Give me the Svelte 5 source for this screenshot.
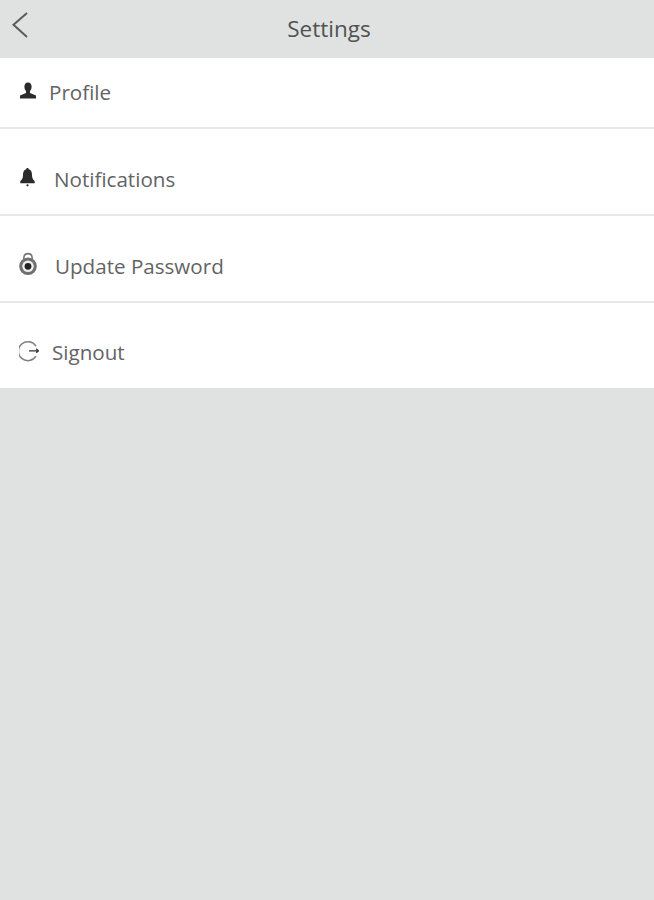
<script lang="ts">
  const rows = [
    { label: 'Profile', icon: 'user', gap: 10 },
    { label: 'Notifications', icon: 'bell', gap: 15 },
    { label: 'Update Password', icon: 'lock', gap: 16 },
    { label: 'Signout', icon: 'out', gap: 13 },
  ];
</script>

<div class="page">
  <header class="bar">
    <svg class="back" width="20" height="30" viewBox="0 0 20 30" aria-label="Back">
      <path d="M18 2 L4.500 13.800 L18 26" fill="none" stroke="#5a5c5c" stroke-width="2" />
    </svg>
    <span class="title">Settings</span>
  </header>

  <ul class="list">
    {#each rows as row}
      <li class="row" style={`gap: ${row.gap}px`}>
        <svg class="icon" width="20" height="28" viewBox="0 0 20 28">
          {#if row.icon === 'user'}
            <path d="M9 4.500c-2.600 0-3.600 2-3.600 4.300 0 2 .7 3.200 1.600 4.200v2L1 17.500v3h16v-3L11 15v-2c.9-1 1.600-2.200 1.600-4.200 0-2.300-1-4.300-3.600-4.300z" fill="#2b2b2b" />
          {:else if row.icon === 'bell'}
            <path d="M8.500 3c-.8 0-1.300.6-1.300 1.300C4.800 5 4 7.200 4 10c0 3-.9 4.600-2.700 6v2.200h14.400V16c-1.800-1.400-2.700-3-2.700-6 0-2.800-.8-5-3.200-5.700C9.800 3.600 9.300 3 8.500 3z" fill="#2b2b2b" />
            <circle cx="8.500" cy="20.300" r="1.100" fill="#2b2b2b" />
          {:else if row.icon === 'lock'}
            <path d="M4.800 8.500V6.500C4.800 3.400 6.600 1.600 9 1.600s4.200 1.800 4.200 4.900V8.500" fill="none" stroke="#777" stroke-width="1.600" />
            <circle cx="9" cy="14.300" r="8.800" fill="#707070" />
            <circle cx="9" cy="14.300" r="5.800" fill="#eee" />
            <circle cx="9" cy="14.300" r="3.400" fill="#222" />
          {:else}
            <path d="M17 8.200A9.500 9.500 0 1 0 17 18.200" fill="none" stroke="#808080" stroke-width="1.500" />
            <path d="M10 12.800h9.500M17.200 10.800l2.300 2-2.300 2" fill="none" stroke="#333" stroke-width="1.200" />
          {/if}
        </svg>
        <span class="label">{row.label}</span>
      </li>
    {/each}
  </ul>
</div>

<style>
  :global(body) {
    margin: 0;
    background: #e0e2e1;
  }
  .page {
    min-height: 900px;
    background: #e0e2e1;
    font-family: "Open Sans", "Noto Sans", sans-serif;
  }
  .bar {
    position: relative;
    height: 58px;
    display: flex;
    justify-content: center;
    align-items: center;
  }
  .back {
    position: absolute;
    left: 9px;
    top: 11px;
  }
  .title {
    font-size: 22.500px;
    color: #505252;
    padding-left: 4px;
    margin-top: -1px;
  }
  .list {
    list-style: none;
    margin: 0;
    padding: 0;
    background: #fff;
  }
  .row {
    height: 87px;
    box-sizing: border-box;
    padding: 0 0 21px 19px;
    display: flex;
    align-items: flex-end;
    border-bottom: 2px solid #e6e8e7;
  }
  .row:first-child {
    height: 71px;
    padding-bottom: 21px;
  }
  .row:last-child {
    border-bottom: 0;
    height: 85px;
    padding-bottom: 22px;
  }
  .icon {
    flex: none;
  }
  .label {
    font-size: 20.600px;
    line-height: 28px;
    color: #626464;
  }
</style>
